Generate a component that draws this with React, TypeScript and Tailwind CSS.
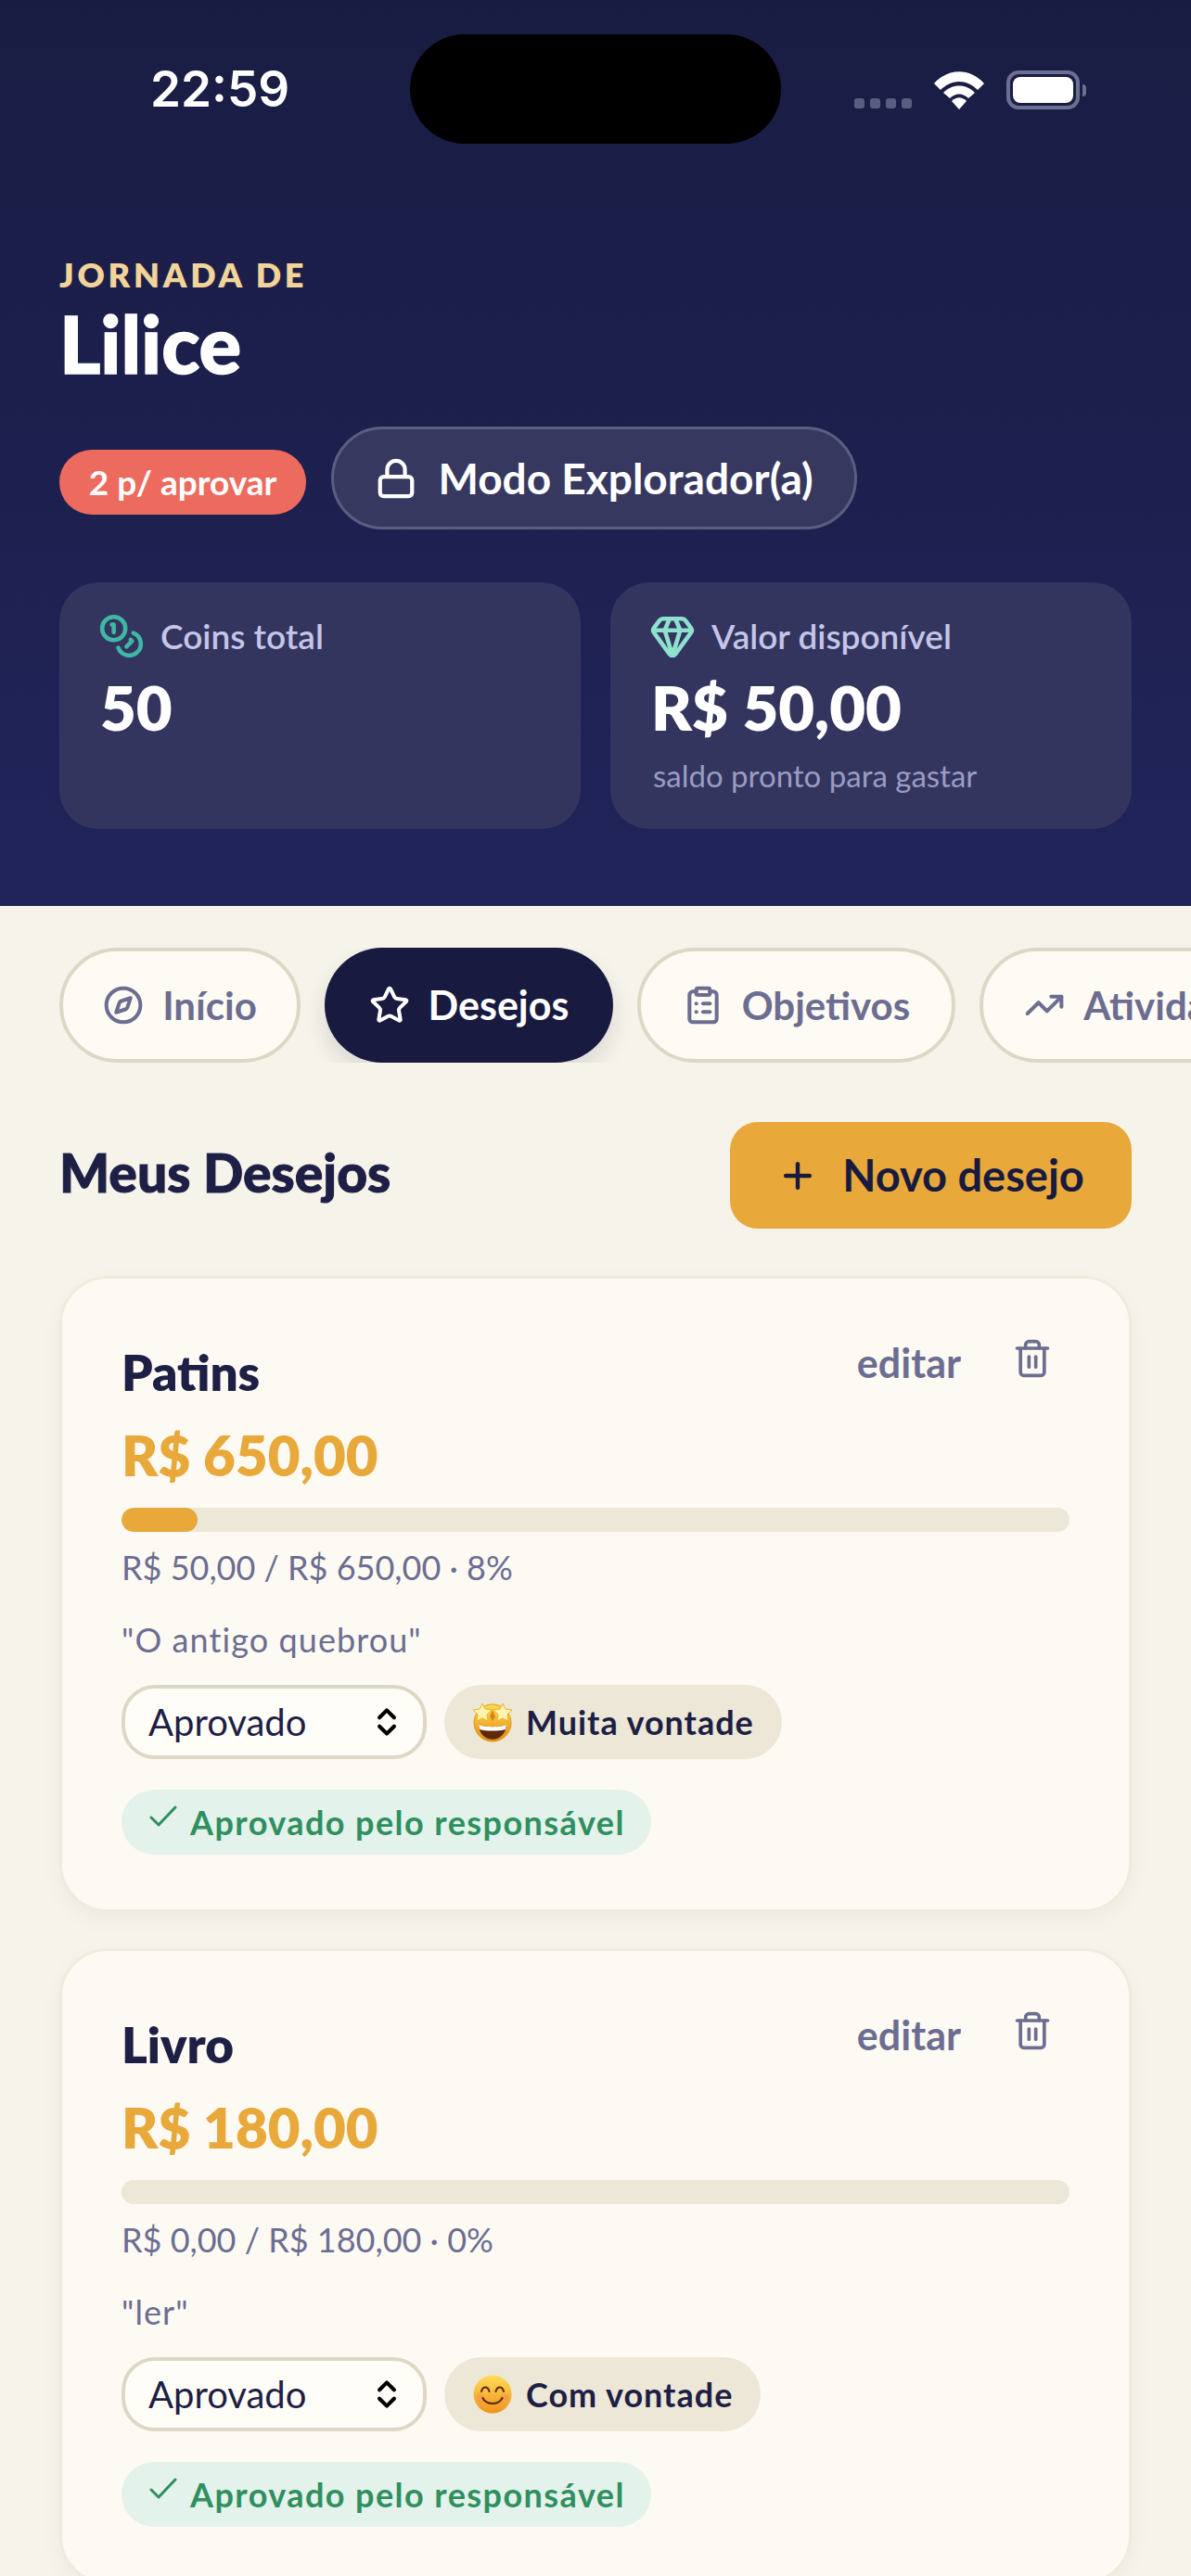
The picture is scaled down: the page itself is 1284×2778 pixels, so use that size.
import { ChevronsUpDown, ClipboardList, Coins, Compass, Gem, Lock, Plus, Star, Trash2, TrendingUp } from 'lucide-react';

const font = 'font-["Lato","Noto_Sans",sans-serif]';

function StatusIcons() {
  return (
    <div className="flex items-end pb-[37px] h-full">
      <div className="flex gap-[6px] mb-[1px]">
        {[0, 1, 2, 3].map((i) => (
          <span key={i} className="w-[11px] h-[11px] rounded-[3px] bg-[#5b5d80]" />
        ))}
      </div>
      <svg className="ml-[24px]" width="54" height="41" viewBox="0 0 54 41">
        <path d="M0 13 C15 -4 39 -4 54 13 L47 20 C35 8 19 8 7 20 Z" fill="#fff" />
        <path d="M10 23 C19 13 35 13 44 23 L37 29 C31 23 23 23 17 29 Z" fill="#fff" />
        <path d="M19 32 C24 27 30 27 35 32 L27 41 Z" fill="#fff" />
      </svg>
      <div className="ml-[24px] w-[79px] h-[42px] rounded-[13px] border-[4px] border-[#6d6f92] p-[3px]">
        <div className="w-full h-full rounded-[8px] bg-white" />
      </div>
      <div className="w-[4px] h-[13px] mb-[14px] ml-[3px] rounded-r-full bg-[#6d6f92]" />
    </div>
  );
}

function Stat({ icon, label, value, hint }: { icon: React.ReactNode; label: string; value: string; hint?: string }) {
  return (
    <div className="h-[266px] rounded-[42px] bg-[#33355f] pl-[46px] pt-[36px]">
      <div className="flex items-center gap-[17px] h-[44px]">
        {icon}
        <span className="text-[37px] leading-[44px] font-semibold text-[#c5c5e8]">{label}</span>
      </div>
      <div className="mt-[16px] -ml-[2px] text-[67px] leading-[76px] font-extrabold text-white">{value}</div>
      {hint && <div className="mt-[16px] text-[33px] leading-[40px] text-[#9b9bc4]">{hint}</div>}
    </div>
  );
}

function Tab({ icon, label, active, w }: { icon: React.ReactNode; label: string; active?: boolean; w: string }) {
  return (
    <div
      className={
        active
          ? `${w} shrink-0 h-[124px] rounded-[62px] bg-[#181a3f] text-white flex items-center justify-center gap-[20px] text-[43px] font-bold shadow-[0_12px_24px_rgba(24,26,63,0.12)]`
          : `${w} shrink-0 h-[124px] rounded-[62px] bg-[#fdfbf4] border-[4px] border-[#ddd8c6] text-[#6c6d91] flex items-center justify-center gap-[20px] text-[42px] font-bold`
      }
    >
      {icon}
      <span className="whitespace-nowrap">{label}</span>
    </div>
  );
}

function StarStruck() {
  return (
    <svg width="44" height="44" viewBox="0 0 44 44">
      <defs>
        <linearGradient id="faceA" x1="0" y1="0" x2="0" y2="1">
          <stop offset="0" stopColor="#ffdb4a" />
          <stop offset="1" stopColor="#e98a16" />
        </linearGradient>
      </defs>
      <circle cx="22" cy="23" r="20" fill="url(#faceA)" stroke="#e39a1e" strokeWidth="1" />
      <path d="M22 9 L25 16 L22 21 L19 16 Z" fill="#d9821a" />
      <path d="M7 25 C14 28 30 28 37 25 C36 46 8 46 7 25 Z" fill="#5b2c0c" />
      <path d="M7 25 C14 28 30 28 37 25 L36 30 C28 32 16 32 8 30 Z" fill="#fff" />
      <path d="M11 2 L14 8 L21 9 L16 14 L17 21 L11 18 L5 21 L6 14 L1 9 L8 8 Z" fill="#fff3b0" stroke="#f0b030" strokeWidth="1" strokeLinejoin="round" />
      <path d="M33 2 L36 8 L43 9 L38 14 L39 21 L33 18 L27 21 L28 14 L23 9 L30 8 Z" fill="#fff3b0" stroke="#f0b030" strokeWidth="1" strokeLinejoin="round" />
    </svg>
  );
}

function Smiling() {
  return (
    <svg width="44" height="44" viewBox="0 0 44 44">
      <defs>
        <linearGradient id="faceB" x1="0" y1="0" x2="0" y2="1">
          <stop offset="0" stopColor="#ffdc55" />
          <stop offset="1" stopColor="#f0921f" />
        </linearGradient>
      </defs>
      <circle cx="22" cy="22" r="20.5" fill="url(#faceB)" />
      <circle cx="9" cy="26" r="4.5" fill="#f58a5c" opacity="0.45" />
      <circle cx="35" cy="26" r="4.5" fill="#f58a5c" opacity="0.45" />
      <path d="M10 19 C11.5 13 17 13 18.5 19" fill="none" stroke="#5b2c0c" strokeWidth="2" strokeLinecap="round" />
      <path d="M25.5 19 C27 13 32.5 13 34 19" fill="none" stroke="#5b2c0c" strokeWidth="2" strokeLinecap="round" />
      <path d="M11.5 26 C15 34 29 34 32.5 26" fill="none" stroke="#5b2c0c" strokeWidth="2" strokeLinecap="round" />
    </svg>
  );
}

function WishCard({ name, price, percent, progress, note, wish, emoji }: { name: string; price: string; percent: number; progress: string; note: string; wish: string; emoji: React.ReactNode }) {
  return (
    <div className="shrink-0 h-[686px] rounded-[52px] border-[3px] border-[#f0ebdd] bg-[#fdfaf3] px-[64px] pt-[66px] shadow-[0_8px_24px_rgba(30,31,69,0.04)]">
      <div className="flex justify-between items-start h-[70px]">
        <div className="text-[53px] leading-[70px] font-extrabold text-[#1e1f45]">{name}</div>
        <div className="flex items-center gap-[55px] pr-[18px] -mt-[7px]">
          <span className="text-[43px] leading-[64px] font-bold text-[#6c6d91]">editar</span>
          <Trash2 size={44} strokeWidth={2} className="mb-[10px] text-[#6c6d91]" />
        </div>
      </div>
      <div className="mt-[16px] text-[60px] leading-[76px] font-extrabold text-[#e8a83a]">{price}</div>
      <div className="mt-[19px] h-[26px] rounded-full bg-[#ece7d6] overflow-hidden">
        <div className="h-full rounded-full bg-[#e8a83a]" style={{ width: `${percent}%` }} />
      </div>
      <div className="mt-[15px] text-[36px] leading-[46px] text-[#6c6d91]">{progress}</div>
      <div className="mt-[32px] text-[36px] leading-[46px] tracking-[0.03em] text-[#6c6d91]">{note}</div>
      <div className="mt-[26px] flex gap-[19px]">
        <div className="w-[329px] h-[80px] rounded-[36px] border-[4px] border-[#ddd8c6] bg-[#fffdf8] pl-[25px] pr-[20px] flex items-center justify-between text-[40px] text-[#1e1f45]">
          Aprovado
          <ChevronsUpDown size={38} strokeWidth={2.6} className="text-black" />
        </div>
        <div className="h-[80px] rounded-full bg-[#ece7d6] pl-[30px] pr-[30px] flex items-center gap-[14px] text-[36px] tracking-[0.027em] font-bold text-[#1e1f45]">
          {emoji}
          {wish}
        </div>
      </div>
      <div className="mt-[33px] w-fit h-[70px] rounded-full bg-[#e3f2ea] pl-[30px] pr-[28px] flex items-center gap-[14px] text-[36px] tracking-[0.04em] font-bold text-[#2f8f5f]">
        <svg width="30" height="24" viewBox="0 0 30 24" className="-mt-[12px]">
          <path d="M2 13 L10 21 L28 2" fill="none" stroke="#2f8f5f" strokeWidth="3" strokeLinecap="round" strokeLinejoin="round" />
        </svg>
        Aprovado pelo responsável
      </div>
    </div>
  );
}

export default function App() {
  return (
    <div className={`${font} w-[1284px] h-[2778px] overflow-hidden bg-[#f6f3ea]`}>
      <header className="h-[977px] bg-gradient-to-b from-[#191c42] to-[#21245a] pt-[37px]">
        <div className="flex h-[118px]">
          <div className="w-[442px] pl-[162px] font-['Inter'] text-[53px] font-semibold leading-[118px] text-white">22:59</div>
          <div className="w-[400px] h-[118px] rounded-[59px] bg-black" />
          <div className="ml-[79px]">
            <StatusIcons />
          </div>
        </div>

        <div className="px-[64px]">
          <div className="mt-[121px] text-[36px] leading-[40px] font-extrabold tracking-[0.105em] text-[#f2d49b]">JORNADA DE</div>
          <div className="mt-[11px] text-[85px] leading-[86px] font-black text-white [-webkit-text-stroke:1.5px_#fff]">Lilice</div>

          <div className="mt-[47px] flex items-center gap-[27px]">
            <div className="mt-[9px] w-[266px] h-[70px] rounded-full bg-[#ec6b5e] flex items-center justify-center text-[37px] font-bold text-white">2 p/ aprovar</div>
            <div className="w-[567px] h-[111px] rounded-full bg-[#363860] border-[3px] border-[#5b5d80] flex items-center justify-center gap-[22px] text-[46px] font-bold text-white">
              <Lock size={46} strokeWidth={2.2} />
              Modo Explorador(a)
            </div>
          </div>

          <div className="mt-[57px] grid grid-cols-2 gap-[32px]">
            <Stat icon={<Coins size={50} strokeWidth={2.2} className="-ml-[4px] text-[#3fb8a3]" />} label="Coins total" value="50" />
            <Stat icon={<Gem size={50} strokeWidth={2.2} className="-ml-[4px] text-[#8fe0cf]" />} label="Valor disponível" value="R$ 50,00" hint="saldo pronto para gastar" />
          </div>
        </div>
      </header>

      <main>
        <div className="mt-[45px] pl-[64px] flex gap-[26px] overflow-hidden">
          <Tab w="w-[260px]" icon={<Compass size={44} strokeWidth={2.2} />} label="Início" />
          <Tab w="w-[311px]" active icon={<Star size={44} strokeWidth={2.2} />} label="Desejos" />
          <Tab w="w-[343px]" icon={<ClipboardList size={44} strokeWidth={2.2} />} label="Objetivos" />
          <Tab w="w-[358px]" icon={<TrendingUp size={44} strokeWidth={2.2} />} label="Atividades" />
        </div>

        <div className="mt-[64px] px-[64px] flex items-center justify-between">
          <h2 className="-mt-[8px] text-[57px] leading-[70px] font-black text-[#1e1f45] [-webkit-text-stroke:1px_#1e1f45]">Meus Desejos</h2>
          <div className="w-[433px] h-[115px] rounded-[30px] bg-[#e8a83a] flex items-center justify-center gap-[26px] text-[47px] font-bold text-[#181a3f]">
            <Plus size={44} strokeWidth={2.4} />
            Novo desejo
          </div>
        </div>

        <div className="mt-[51px] mx-[64px] flex flex-col gap-[39px]">
          <WishCard name="Patins" price="R$ 650,00" percent={8} progress="R$ 50,00 / R$ 650,00 · 8%" note={'"O antigo quebrou"'} wish="Muita vontade" emoji={<StarStruck />} />
          <WishCard name="Livro" price="R$ 180,00" percent={0} progress="R$ 0,00 / R$ 180,00 · 0%" note={'"ler"'} wish="Com vontade" emoji={<Smiling />} />
        </div>
      </main>
    </div>
  );
}
